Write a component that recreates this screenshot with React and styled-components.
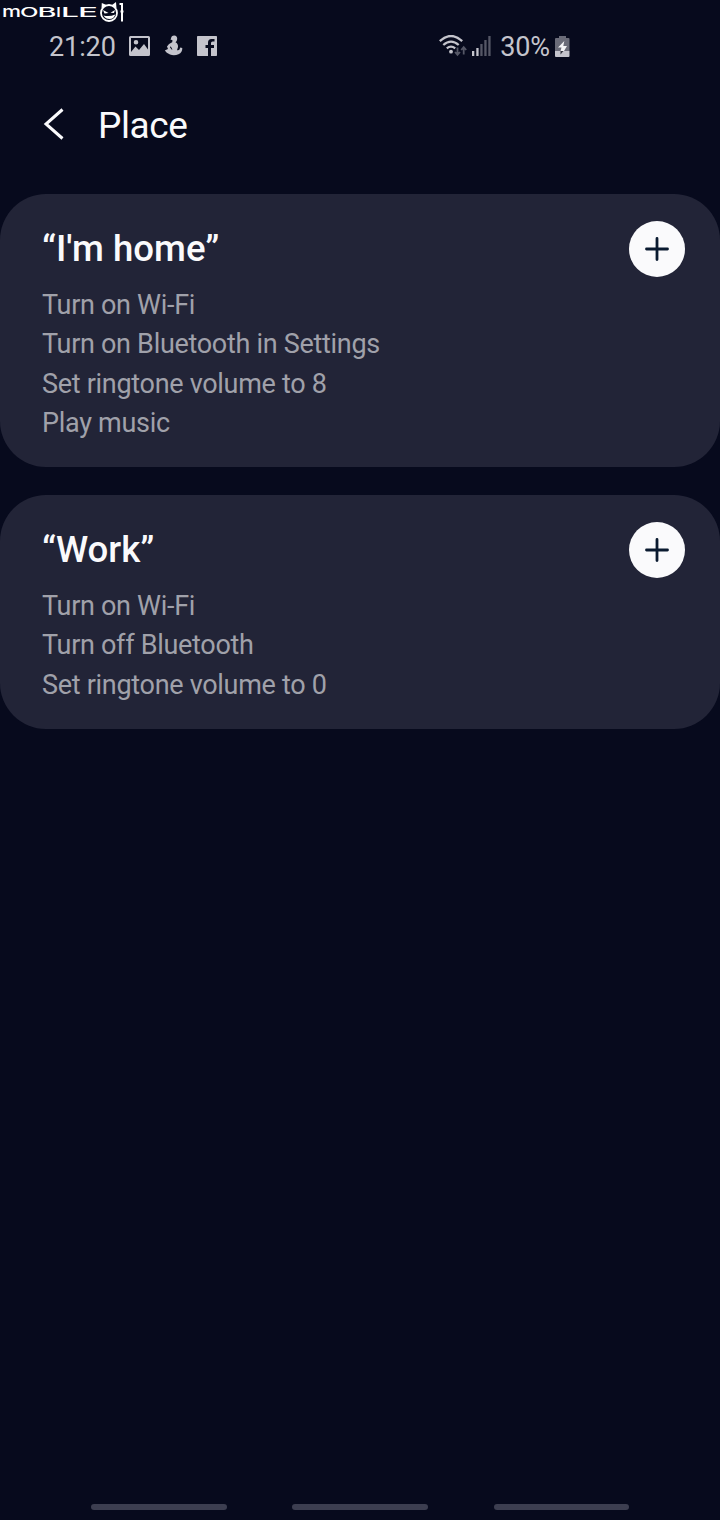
import React from "react";
import styled, { createGlobalStyle } from "styled-components";

const GlobalStyle = createGlobalStyle`
  * {
    box-sizing: border-box;
  }
  body {
    margin: 0;
    background: #070a1d;
    font-family: Roboto, "Liberation Sans", sans-serif;
  }
`;

const Screen = styled.div`
  position: relative;
  width: 720px;
  height: 1520px;
  display: flex;
  flex-direction: column;
  background: #070a1d;
  color: #fafafc;
  overflow: hidden;
`;

const Watermark = styled.svg`
  position: absolute;
  top: 0;
  left: 0;
`;

const StatusBar = styled.div`
  display: flex;
  justify-content: space-between;
  align-items: center;
  height: 94px;
  padding: 0 150px 2px 49px;
  color: #c4c4cc;
`;

const StatusGroup = styled.div`
  display: flex;
  align-items: center;
`;

const StatusText = styled.span`
  padding-top: 2px;
  margin-left: ${(props) => props.$gap || 0}px;
  font-size: 27px;
  line-height: 32px;
  letter-spacing: -0.1px;
`;

const StatusIcon = styled.svg`
  display: block;
  flex: none;
  margin-left: ${(props) => props.$gap || 0}px;
`;

const Header = styled.header`
  display: flex;
  align-items: center;
  height: 100px;
  padding: 0 42px 36px;
`;

const BackButton = styled.button`
  display: flex;
  width: 56px;
  padding: 0 0 4px;
  border: 0;
  background: none;
`;

const PageTitle = styled.h1`
  margin: 0;
  font-size: 37px;
  font-weight: 400;
  line-height: 44px;
  letter-spacing: -0.4px;
`;

const CardList = styled.main`
  display: flex;
  flex-direction: column;
  gap: 28px;
  flex: 1;
`;

const Card = styled.section`
  display: flex;
  justify-content: space-between;
  align-items: flex-start;
  padding: 26.5px 35px 23.5px 42px;
  border-radius: 46px;
  background: #222437;
`;

const CardTitle = styled.h2`
  margin: 0 0 9px;
  font-size: 36.6px;
  font-weight: 500;
  line-height: 56px;
`;

const Actions = styled.ul`
  margin: 0;
  padding: 0;
  list-style: none;
`;

const Action = styled.li`
  font-size: 27px;
  line-height: 39.6px;
  letter-spacing: -0.3px;
  color: #a0a1aa;
`;

const AddButton = styled.button`
  display: flex;
  align-items: center;
  justify-content: center;
  width: 56px;
  height: 56px;
  padding: 0;
  border: 0;
  border-radius: 50%;
  background: #fafafc;
`;

const NavBar = styled.nav`
  display: flex;
  justify-content: space-between;
  padding: 0 91px 10px;
`;

const NavHandle = styled.span`
  width: 135.5px;
  height: 6px;
  border-radius: 3px;
  background: #3c3e50;
`;

const places = [
  {
    name: "I'm home",
    actions: [
      "Turn on Wi-Fi",
      "Turn on Bluetooth in Settings",
      "Set ringtone volume to 8",
      "Play music",
    ],
  },
  {
    name: "Work",
    actions: ["Turn on Wi-Fi", "Turn off Bluetooth", "Set ringtone volume to 0"],
  },
];

// every letter of the wordmark is stretched to its own width
const letters = [
  { char: "m", x: 2, width: 19, size: 16.5 },
  { char: "O", x: 20, width: 18.5, size: 12.5 },
  { char: "B", x: 37.5, width: 19, size: 12.5 },
  { char: "I", x: 56, width: 5, size: 12.5 },
  { char: "L", x: 61, width: 18, size: 12.5 },
  { char: "E", x: 78, width: 20, size: 12.5 },
];

function Logo() {
  return (
    <Watermark width="130" height="26" viewBox="0 0 130 26">
      {letters.map((letter) => (
        <text
          key={letter.char}
          x={letter.x}
          y="17"
          fill="#fff"
          fontFamily="Inter, sans-serif"
          fontSize={letter.size}
          fontWeight="500"
          textLength={letter.width}
          lengthAdjust="spacingAndGlyphs"
        >
          {letter.char}
        </text>
      ))}
      <circle cx="109" cy="13" r="8" fill="none" stroke="#fff" strokeWidth="1.800" />
      <path d="M101.500 8.500 101.800 3 106.500 5ZM112 5 116 2 116.500 8.500Z" fill="#fff" />
      <path d="M103 10 108.500 13 104.500 13.500ZM115 10 110.500 12.800 114 13ZM103.500 15.500Q109.500 17 115.300 14.500Q113.800 19 109.500 19Q105.500 19 103.500 15.500Z" fill="#fff" />
      <path d="M119.500 4H122V10M122 10V21.500M120.500 11.500H123.500" fill="none" stroke="#fff" strokeWidth="2" />
    </Watermark>
  );
}

function Status() {
  return (
    <StatusBar>
      <StatusGroup>
        <StatusText>21:20</StatusText>
        <StatusIcon $gap={13} width="22" height="20" viewBox="0 0 22 20">
          <path
            fill="currentColor"
            fillRule="evenodd"
            d="M1.500 0H19.500Q21 0 21 1.500V18.500Q21 20 19.500 20H1.500Q0 20 0 18.500V1.500Q0 0 1.500 0ZM2 2V16L6.500 10.500 10 14 15 8 19 13.500V2ZM7 4A2.300 2.300 0 1 1 7 8.600A2.300 2.300 0 1 1 7 4Z"
          />
        </StatusIcon>
        <StatusIcon $gap={13} width="20" height="22" viewBox="0 0 20 22">
          <path
            fill="currentColor"
            d="M7 3.500Q7.300 .6 10.200 .6Q13.300 .9 13.200 4Q13 6.200 11.500 7.300Q14.300 8.800 14 12L13 15.200Q15.800 15.500 16.300 12.500L18.300 13Q18.500 17.500 14.500 19.200Q10.500 21 6 19.600L2.800 17.800 .8 15.500 4 14 3 11.500Q4.500 8.500 8.200 7.200L8.500 5.300 6.500 4.500ZM5.800 12 7.500 14.500 8.500 14.500 6.800 11.500Z"
            fillRule="evenodd"
          />
        </StatusIcon>
        <StatusIcon $gap={13} width="20" height="20" viewBox="0 0 20 20">
          <path
            fill="currentColor"
            d="M.8 0H19.200Q20 0 20 .8V19.200Q20 20 19.200 20H14V12H17V9H14V7Q14 5.500 15.500 5.500H17.500V3H14.500Q11 3 11 6.500V9H8.500V12H11V20H.8Q0 20 0 19.200V.8Q0 0 .8 0Z"
          />
        </StatusIcon>
      </StatusGroup>
      <StatusGroup>
        <StatusIcon width="28" height="22" viewBox="0 0 28 22">
          <g fill="none" stroke="currentColor" strokeWidth="2.300">
            <path d="M.8 6.100Q12 -4.100 23.200 6.100" />
            <path d="M4.300 10Q12 3.200 19.700 10" />
            <path d="M7.800 13.400Q12 9.800 16.200 13.400" />
          </g>
          <circle cx="12" cy="16.700" r="1.900" fill="currentColor" />
          <path
            fill="none"
            stroke="#555766"
            strokeWidth="1.800"
            d="M18.500 12.500V19.500M16 17 18.500 19.800 21 17M24.700 19.500V12.500M22.200 15 24.700 12.200 27.200 15"
          />
        </StatusIcon>
        <StatusIcon $gap={5} width="20" height="20" viewBox="0 0 20 20">
          <path fill="currentColor" d="M0 15H2.300V20H0ZM4.300 12H6.600V20H4.300Z" />
          <path fill="#555766" d="M8.300 8H10.600V20H8.300ZM12.300 4H14.600V20H12.300ZM16.300 0H18.600V20H16.300Z" />
        </StatusIcon>
        <StatusText $gap={8}>30%</StatusText>
        <StatusIcon $gap={5} width="15" height="21" viewBox="0 0 15 21">
          <path fill="#6a6b78" d="M4 0H11V2H13.500Q14.500 2 14.500 3V15H0V3Q0 2 1 2H4Z" />
          <path fill="currentColor" d="M0 15H14.500V20Q14.500 21 13.500 21H1Q0 21 0 20Z" />
          <path fill="#f4f4f6" d="M9.300 5 3 11.500H6.500L5.500 15H9L12 10H8.300Z" />
          <path fill="#33353f" d="M5.500 15H8.500L5.500 18.500Z" />
        </StatusIcon>
      </StatusGroup>
    </StatusBar>
  );
}

function PlaceCard({ place }) {
  return (
    <Card>
      <div>
        <CardTitle>“{place.name}”</CardTitle>
        <Actions>
          {place.actions.map((action) => (
            <Action key={action}>{action}</Action>
          ))}
        </Actions>
      </div>
      <AddButton aria-label={`Add ${place.name}`}>
        <svg width="24" height="24" viewBox="0 0 24 24">
          <path
            d="M12 1.500V22.500M1.500 12H22.500"
            stroke="#0a1a30"
            strokeWidth="2.800"
            strokeLinecap="round"
          />
        </svg>
      </AddButton>
    </Card>
  );
}

function App() {
  return (
    <Screen>
      <GlobalStyle />
      <Logo />
      <Status />
      <Header>
        <BackButton aria-label="Back">
          <svg width="24" height="34" viewBox="0 0 24 34">
            <path
              d="M20.500 2.500 4 17 20.500 31.500"
              fill="none"
              stroke="#fafafc"
              strokeWidth="3"
            />
          </svg>
        </BackButton>
        <PageTitle>Place</PageTitle>
      </Header>
      <CardList>
        {places.map((place) => (
          <PlaceCard key={place.name} place={place} />
        ))}
      </CardList>
      <NavBar>
        <NavHandle />
        <NavHandle />
        <NavHandle />
      </NavBar>
    </Screen>
  );
}

export default App;
